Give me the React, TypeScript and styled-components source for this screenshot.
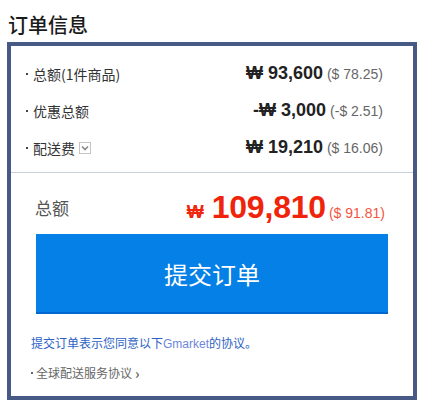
import styled, { createGlobalStyle } from "styled-components";

const GlobalStyle = createGlobalStyle`
  body {
    margin: 0;
    background: #ffffff;
    font-family: "Liberation Sans", "Noto Sans CJK SC", Arial, sans-serif;
    color: #333333;
  }
`;

const Page = styled.div`
  width: 431px;
  height: 411px;
  padding-top: 10px;
  box-sizing: border-box;
`;

const Title = styled.h2`
  margin: 0 0 2px 8px;
  font-family: "Noto Sans CJK SC", sans-serif;
  font-size: 20px;
  font-weight: 500;
  line-height: 30px;
  color: #1a1a1a;
`;

const Box = styled.div`
  margin-left: 7px;
  width: 410px;
  height: 358px;
  box-sizing: border-box;
  border: 4px solid #475a85;
  display: flex;
  flex-direction: column;
`;

const Summary = styled.div`
  padding: 9px 30px 6px 15px;
  border-bottom: 1px solid #c9d1dd;
  display: flex;
  flex-direction: column;
`;

const Row = styled.div`
  height: 37px;
  display: flex;
  align-items: center;
  justify-content: space-between;
`;

const Label = styled.span`
  display: flex;
  align-items: center;
  font-family: "Noto Sans CJK SC", sans-serif;
  font-size: 14px;
  color: #333333;

  &::before {
    content: "";
    width: 2px;
    height: 2px;
    background: #444444;
    margin-right: 5px;
  }
`;

const Toggle = styled.span`
  width: 10px;
  height: 10px;
  margin-left: 4px;
  border: 1px solid #c4c4c4;
  display: flex;
  align-items: center;
  justify-content: center;
`;

const Amount = styled.span`
  display: flex;
  align-items: baseline;
  gap: 4px;
`;

const Won = styled.b`
  font-family: "Liberation Sans", Arial, sans-serif;
  font-size: 18px;
  font-weight: 700;
  color: #222222;
`;

const Usd = styled.span`
  font-family: "Liberation Sans", Arial, sans-serif;
  font-size: 14px;
  color: #666666;
`;

const Total = styled.div`
  padding: 17px 28px 0 24px;
  height: 34px;
  display: flex;
  align-items: center;
  justify-content: space-between;
`;

const TotalLabel = styled.span`
  font-family: "Noto Sans CJK SC", sans-serif;
  font-size: 17px;
  color: #555555;
`;

const TotalAmount = styled.span`
  display: flex;
  align-items: baseline;
  color: #f0230b;
`;

const TotalSign = styled.b`
  font-size: 18px;
  margin-right: 8px;
`;

const TotalNum = styled.b`
  font-size: 32px;
  font-weight: 700;
  letter-spacing: -0.2px;
  margin-right: 3px;
`;

const TotalUsd = styled.span`
  font-size: 14px;
  color: #f2553f;
`;

const SubmitButton = styled.button`
  margin: 10px 25px 0 25px;
  height: 80px;
  border: none;
  border-bottom: 2px solid #0068d0;
  background: #0580e6;
  color: #ffffff;
  font-family: "Noto Sans CJK SC", sans-serif;
  font-size: 24px;
  cursor: pointer;
`;

const Notes = styled.div`
  padding: 20px 20px 0 20px;
  display: flex;
  flex-direction: column;
  gap: 11px;
`;

const Agree = styled.p`
  margin: 0;
  font-family: "Noto Sans CJK SC", sans-serif;
  font-size: 12px;
  line-height: 18px;
  color: #2d62c4;
`;

const Brand = styled.span`
  font-family: "Liberation Sans", Arial, sans-serif;
  color: #6e86dc;
`;

const Policy = styled.a`
  display: flex;
  align-items: center;
  font-family: "Noto Sans CJK SC", sans-serif;
  font-size: 12px;
  line-height: 18px;
  color: #666666;
  text-decoration: none;

  &::before {
    content: "";
    width: 2px;
    height: 2px;
    background: #666666;
    margin-right: 3px;
  }
`;

const Arrow = styled.span`
  margin-left: 3px;
  font-size: 14px;
  font-weight: 700;
  color: #666666;
`;

const rows = [
  { label: "总额(1件商品)", won: "₩ 93,600", usd: "($ 78.25)" },
  { label: "优惠总额", won: "-₩ 3,000", usd: "(-$ 2.51)" },
  { label: "配送费", won: "₩ 19,210", usd: "($ 16.06)", toggle: true },
];

export default function App() {
  return (
    <>
      <GlobalStyle />
      <Page>
        <Title>订单信息</Title>
        <Box>
          <Summary>
            {rows.map((row) => (
              <Row key={row.label}>
                <Label>
                  {row.label}
                  {row.toggle && (
                    <Toggle>
                      <svg width="8" height="6" viewBox="0 0 8 6">
                        <path d="M1 1.5 L4 4.5 L7 1.5" fill="none" stroke="#8a8a8a" strokeWidth="1.6" />
                      </svg>
                    </Toggle>
                  )}
                </Label>
                <Amount>
                  <Won>{row.won}</Won>
                  <Usd>{row.usd}</Usd>
                </Amount>
              </Row>
            ))}
          </Summary>
          <Total>
            <TotalLabel>总额</TotalLabel>
            <TotalAmount>
              <TotalSign>₩</TotalSign>
              <TotalNum>109,810</TotalNum>
              <TotalUsd>($ 91.81)</TotalUsd>
            </TotalAmount>
          </Total>
          <SubmitButton>提交订单</SubmitButton>
          <Notes>
            <Agree>
              提交订单表示您同意以下<Brand>Gmarket</Brand>的协议。
            </Agree>
            <Policy href="#">
              全球配送服务协议<Arrow>›</Arrow>
            </Policy>
          </Notes>
        </Box>
      </Page>
    </>
  );
}
